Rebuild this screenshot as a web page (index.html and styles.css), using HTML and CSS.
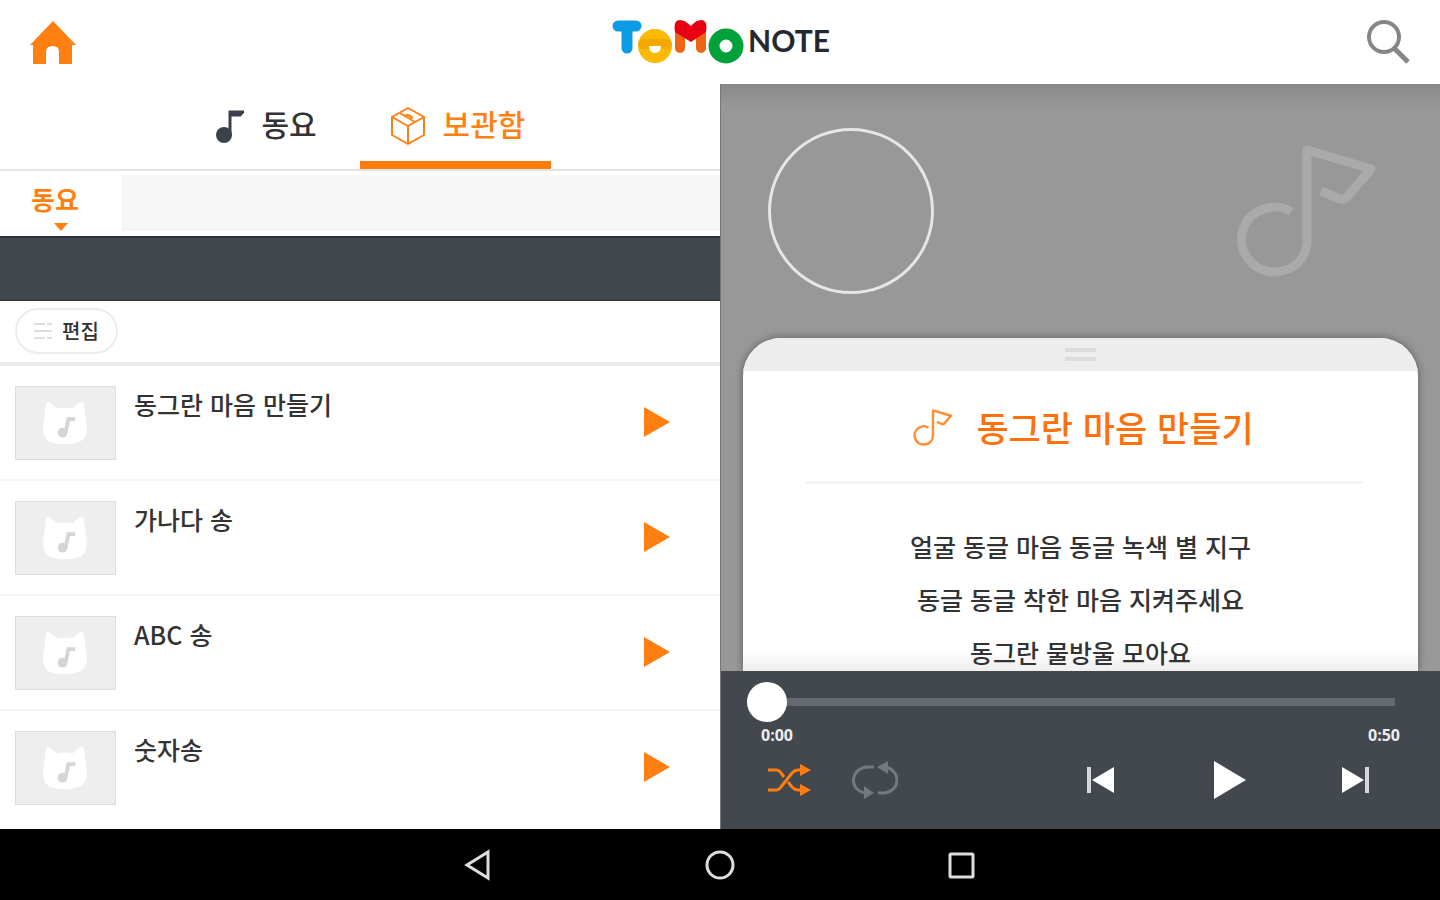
FILE: index.html
```html
<!DOCTYPE html>
<html lang="ko">
<head>
    <meta charset="UTF-8">
    <meta name="viewport" content="width=device-width, initial-scale=1.0">
    <title>TOMO NOTE</title>
    <link rel="stylesheet" href="styles.css">
</head>
<body>

    <!-- shared shapes -->
    <svg class="sprite" aria-hidden="true">
        <symbol id="line-note" viewBox="0 0 140 132">
            <path d="M54 67 C46 61 32 60 20 67 C6 75 2 91 6 104 C11 119 24 127 38 127 C58 126 70 113 70 94 V5 L134 24 L110 52 Q107 55 103 54 L84 46" fill="none" stroke="currentColor" stroke-linejoin="round" stroke-linecap="butt"/>
        </symbol>
        <symbol id="cat" viewBox="0 0 102 74">
            <path d="M31 17 Q32 13 36 17 L42 22 Q50 20 58 22 L64 17 Q69 13 70 18 L73 40 Q74 52 66 56 Q50 62 34 56 Q27 51 28 40 Z" fill="#fff"/>
            <circle cx="48" cy="47" r="5" fill="#d5d5d5"/>
            <path d="M51 47 L54 33 H61" fill="none" stroke="#d5d5d5" stroke-width="4"/>
        </symbol>
    </svg>

    <header class="topbar">
        <a href="#" class="home" aria-label="홈">
            <svg width="46" height="44" viewBox="0 0 46 44"><path d="M23 0 L46 24 H42 V43 H29 V31 Q29 25 23 25 Q16 25 16 31 V43 H3 V24 H0 Z" fill="#ff7f11"/></svg>
        </a>
        <h1 class="logo">
            <svg width="134" height="46" viewBox="0 0 134 46" role="img" aria-label="TOMO">
                <g stroke="#0d9be3" stroke-width="11" stroke-linecap="round">
                    <line x1="8" y1="7" x2="26" y2="7"/>
                    <line x1="17" y1="8" x2="17" y2="29"/>
                </g>
                <circle cx="45" cy="27" r="17" fill="#fbb900"/>
                <path d="M28 25 Q29 20 33 20 H57 Q61 20 62 25 L59 30 H31 Z" fill="#f5a800"/>
                <path d="M39 27 H51 Q51 34 45 34 Q39 34 39 27 Z" fill="#fff"/>
                <g stroke="#ef6414" stroke-width="10" stroke-linecap="round">
                    <line x1="70" y1="8" x2="70" y2="29"/>
                    <line x1="91" y1="8" x2="91" y2="29"/>
                </g>
                <path d="M81 23 L65 13 Q63 1 70 1 Q75 1 81 7 Q86 1 91 1 Q98 1 96 13 Z" fill="#e60012"/>
                <circle cx="116" cy="27" r="12" fill="none" stroke="#00a03a" stroke-width="11"/>
            </svg>
            <span>NOTE</span>
        </h1>
        <button class="search" aria-label="검색">
            <svg width="44" height="44" viewBox="0 0 44 44" fill="none" stroke="#868686" stroke-width="4"><circle cx="18" cy="17" r="15"/><path d="M28 28 L42 42" stroke-width="5"/></svg>
        </button>
    </header>

    <main>
        <section class="library">
            <nav class="tabs">
                <a href="#" class="tab">
                    <svg width="28" height="34" viewBox="0 0 28 34"><circle cx="8" cy="26" r="8" fill="#3b424b"/><path d="M14 27 V3 H27 L24 6 H14" fill="none" stroke="#3b424b" stroke-width="3"/></svg>
                    동요
                </a>
                <a href="#" class="tab active">
                    <svg width="36" height="38" viewBox="0 0 36 38" fill="none" stroke="#ff7f11" stroke-width="2" stroke-linejoin="round"><path d="M18 1 L34 10 V28 L18 37 L2 28 V10 Z"/><path d="M2 10 L18 19 L34 10 M18 19 V37"/><path d="M10 6 L25 15 M14 9 L18 8 L22 10 L20 13"/></svg>
                    보관함
                </a>
            </nav>
            <div class="categories">
                <a href="#" class="category">동요</a>
                <div class="category-rest"></div>
            </div>
            <div class="banner"></div>
            <div class="toolbar">
                <button class="edit">
                    <svg width="18" height="18" viewBox="0 0 18 18" stroke="#dedede" stroke-width="2"><path d="M0 2 H11 M13 2 H18 M0 9 H18 M0 16 H11 M13 16 H18"/></svg>
                    편집
                </button>
            </div>
            <ul class="songs">
                <li>
                    <svg class="thumb"><use href="#cat"/></svg>
                    <span>동그란 마음 만들기</span>
                    <button aria-label="재생"><svg width="26" height="30" viewBox="0 0 26 30"><path d="M0 0 L26 15 L0 30 Z" fill="#ff7f11"/></svg></button>
                </li>
                <li>
                    <svg class="thumb"><use href="#cat"/></svg>
                    <span>가나다 송</span>
                    <button aria-label="재생"><svg width="26" height="30" viewBox="0 0 26 30"><path d="M0 0 L26 15 L0 30 Z" fill="#ff7f11"/></svg></button>
                </li>
                <li>
                    <svg class="thumb"><use href="#cat"/></svg>
                    <span>ABC 송</span>
                    <button aria-label="재생"><svg width="26" height="30" viewBox="0 0 26 30"><path d="M0 0 L26 15 L0 30 Z" fill="#ff7f11"/></svg></button>
                </li>
                <li>
                    <svg class="thumb"><use href="#cat"/></svg>
                    <span>숫자송</span>
                    <button aria-label="재생"><svg width="26" height="30" viewBox="0 0 26 30"><path d="M0 0 L26 15 L0 30 Z" fill="#ff7f11"/></svg></button>
                </li>
            </ul>
        </section>

        <section class="player">
            <div class="stage">
                <div class="cover">
                    <div class="disc"></div>
                    <svg class="big-note"><use href="#line-note"/></svg>
                </div>
                <article class="sheet">
                    <div class="handle"></div>
                    <h2>
                        <svg class="small-note"><use href="#line-note"/></svg>
                        동그란 마음 만들기
                    </h2>
                    <div class="lyrics">
                        <p>얼굴 동글 마음 동글 녹색 별 지구</p>
                        <p>동글 동글 착한 마음 지켜주세요</p>
                        <p>동그란 물방울 모아요</p>
                    </div>
                </article>
            </div>
            <div class="controls">
                <input type="range" min="0" max="50" value="0" aria-label="재생 위치">
                <div class="times"><span>0:00</span><span>0:50</span></div>
                <div class="buttons">
                    <button aria-label="셔플">
                        <svg width="44" height="32" viewBox="0 0 44 32"><g fill="none" stroke="#ff7f11" stroke-width="3"><path d="M0 6 H8 Q11 6 13 9 L16 13 M20 18 L24 23 Q27 26 30 26 H34"/><path d="M0 26 H8 Q11 26 13 23 L24 9 Q27 6 30 6 H34"/></g><path d="M32 0 L43 6 L32 12 Z M32 20 L43 26 L32 32 Z" fill="#ff7f11"/></svg>
                    </button>
                    <button aria-label="반복">
                        <svg width="46" height="38" viewBox="0 0 46 38"><g fill="none" stroke="#747980" stroke-width="3"><path d="M22 6 H15 C-3 8 -3 30 14 32"/><path d="M26 32 H32 C49 30 49 10 34 6"/></g><path d="M36 0 V13 L25 6 Z M12 25 V38 L22 32 Z" fill="#747980"/></svg>
                    </button>
                    <div class="transport">
                        <button aria-label="이전"><svg width="28" height="26" viewBox="0 0 28 26"><path d="M28 0 V26 L6 13 Z" fill="#fff"/><path d="M1 0 H5 V26 H1 Z" fill="#d5d7d9"/></svg></button>
                        <button aria-label="재생"><svg width="36" height="38" viewBox="0 0 36 38"><path d="M4 0 L36 19 L4 38 Z" fill="#fff"/></svg></button>
                        <button aria-label="다음"><svg width="28" height="26" viewBox="0 0 28 26"><path d="M0 0 L22 13 L0 26 Z" fill="#fff"/><path d="M23 0 H27 V26 H23 Z" fill="#d5d7d9"/></svg></button>
                    </div>
                </div>
            </div>
        </section>
    </main>

    <footer class="system-nav">
        <button aria-label="뒤로"><svg width="28" height="32" viewBox="0 0 28 32"><path d="M24 3 V29 L3 16 Z"/></svg></button>
        <button aria-label="홈 화면"><svg width="30" height="32" viewBox="0 0 30 32"><circle cx="15" cy="16" r="13"/></svg></button>
        <button aria-label="최근 앱"><svg width="28" height="32" viewBox="0 0 28 32"><rect x="2" y="5" width="23" height="23" rx="1"/></svg></button>
    </footer>

</body>
</html>
```
FILE: styles.css
```css
* {
    box-sizing: border-box;
}

body {
    margin: 0;
    height: 100vh;
    display: flex;
    flex-direction: column;
    overflow: hidden;
    background: white;
    color: #333;
    font-family: "Noto Sans CJK KR", sans-serif;
    font-weight: 500;
}

h1, h2, p, ul {
    margin: 0;
    padding: 0;
}

a {
    color: inherit;
    text-decoration: none;
}

button {
    display: flex;
    padding: 0;
    border: none;
    background: none;
    font: inherit;
    color: inherit;
    cursor: pointer;
}

svg {
    display: block;
    flex: none;
}

.sprite {
    position: absolute;
    width: 0;
    height: 0;
}

/* top bar */
.topbar {
    flex: none;
    display: grid;
    grid-template-columns: 1fr auto 1fr;
    align-items: center;
    height: 84px;
    padding: 0 30px;
}

.home {
    padding-top: 2px;
}

.search {
    justify-self: end;
}

.logo {
    display: flex;
    align-items: flex-start;
    gap: 4px;
    font-family: Lato, sans-serif;
    font-size: 30px;
    font-weight: 700;
    line-height: 42px;
    color: #25292d;
}

main {
    flex: 1;
    min-height: 0;
    display: flex;
}

/* song library */
.library {
    width: 50%;
    overflow: hidden;
}

.tabs {
    display: flex;
    justify-content: center;
    height: 87px;
    border-bottom: 2px solid #e4e4e4;
}

.tab {
    display: flex;
    align-items: center;
    justify-content: center;
    gap: 17px;
    width: 191px;
    padding-left: 4px;
    border-bottom: 8px solid transparent;
    font-size: 30px;
    line-height: 44px;
}

.tab svg {
    margin-top: 6px;
}

.tab.active {
    color: #ff7f11;
    border-color: #ff7b0a;
}

.categories {
    display: flex;
    height: 65px;
    padding: 4px 0 5px;
}

.category {
    display: flex;
    flex-direction: column;
    align-items: center;
    width: 122px;
    padding-right: 12px;
    padding-top: 6px;
    font-size: 26px;
    font-weight: 700;
    line-height: 36px;
    color: #ff7f11;
}

.category::after {
    content: "";
    margin-left: 12px;
    margin-top: 6px;
    border: 7px solid transparent;
    border-top: 8px solid #ff7f11;
    border-bottom: none;
}

.category-rest {
    flex: 1;
    background: #f6f6f6;
}

.banner {
    height: 65px;
    background: #43484f;
    border-top: 2px solid #2a303d;
    border-bottom: 2px solid #353a40;
}

.toolbar {
    height: 65px;
    padding: 7px 15px;
    border-bottom: 4px solid #ebebeb;
}

.edit {
    align-items: center;
    justify-content: center;
    gap: 10px;
    width: 103px;
    height: 46px;
    border: 2px solid #ececec;
    border-radius: 23px;
    font-size: 20px;
    line-height: 30px;
}

.songs {
    list-style: none;
}

.songs li {
    display: flex;
    align-items: flex-start;
    gap: 18px;
    height: 115px;
    padding: 20px 50px 0 15px;
    border-bottom: 2px solid #f5f5f5;
}

.songs li:last-child {
    border-bottom: none;
}

.songs span {
    flex: 1;
    font-size: 25px;
    line-height: 36px;
}

.songs button {
    margin-top: 21px;
}

.thumb {
    width: 101px;
    height: 74px;
    background: #eee;
    border: 1px solid #dedede;
}

/* player */
.player {
    flex: 1;
    display: flex;
    flex-direction: column;
    min-width: 0;
    border-left: 1px solid #777;
}

.stage {
    flex: 1;
    min-height: 0;
    display: flex;
    flex-direction: column;
    overflow: hidden;
    padding: 0 22px;
    background: linear-gradient(#888, #989898 24px);
}

.cover {
    flex: none;
    display: flex;
    justify-content: space-between;
    align-items: center;
    height: 254px;
    padding: 0 41px 0 25px;
}

.disc {
    width: 166px;
    height: 166px;
    border: 3px solid #e6e6e6;
    border-radius: 50%;
}

.big-note {
    width: 140px;
    height: 132px;
    color: #aaa;
    stroke-width: 9px;
}

.sheet {
    flex: 1;
    overflow: hidden;
    border-radius: 38px 38px 0 0;
    background: linear-gradient(to top, #eee, white 20px);
    box-shadow: 0 0 8px rgba(0, 0, 0, 0.4);
}

.handle {
    display: flex;
    justify-content: center;
    align-items: center;
    height: 33px;
    background: #ededed;
}

.handle::before {
    content: "";
    width: 31px;
    height: 5px;
    border: solid #dcdcdc;
    border-width: 4px 0;
}

.sheet h2 {
    display: flex;
    align-items: center;
    justify-content: center;
    gap: 23px;
    height: 113px;
    margin: 0 56px 0 62px;
    padding-top: 2px;
    border-bottom: 3px solid #f4f4f4;
    font-size: 35px;
    font-weight: 500;
    line-height: 52px;
    color: #ff6f0a;
}

.small-note {
    width: 40px;
    height: 37px;
    color: #ff8f35;
    stroke-width: 9px;
}

.lyrics {
    padding-top: 36px;
    font-size: 25px;
    line-height: 53px;
    text-align: center;
}

.controls {
    flex: none;
    padding: 11px 0 17px;
    background: #43484f;
}

.controls input {
    display: block;
    appearance: none;
    width: calc(100% - 71px);
    height: 40px;
    margin: 0 45px 0 26px;
    background: linear-gradient(#646970, #646970) center / 100% 8px no-repeat;
}

.controls input::-webkit-slider-thumb {
    appearance: none;
    width: 40px;
    height: 40px;
    border-radius: 50%;
    background: white;
}

.times {
    display: flex;
    justify-content: space-between;
    padding: 0 40px;
    font-family: "Open Sans", sans-serif;
    font-size: 16px;
    font-weight: 700;
    line-height: 26px;
    color: #eee;
}

.buttons {
    display: flex;
    align-items: center;
    gap: 40px;
    height: 64px;
    padding: 0 70px 0 47px;
}

.transport {
    display: flex;
    align-items: center;
    gap: 96px;
    margin-left: auto;
}

/* android navigation */
.system-nav {
    flex: none;
    display: flex;
    align-items: center;
    justify-content: center;
    gap: 213px;
    height: 71px;
    background: black;
}

.system-nav svg {
    fill: none;
    stroke: #ddd;
    stroke-width: 3px;
}
```
